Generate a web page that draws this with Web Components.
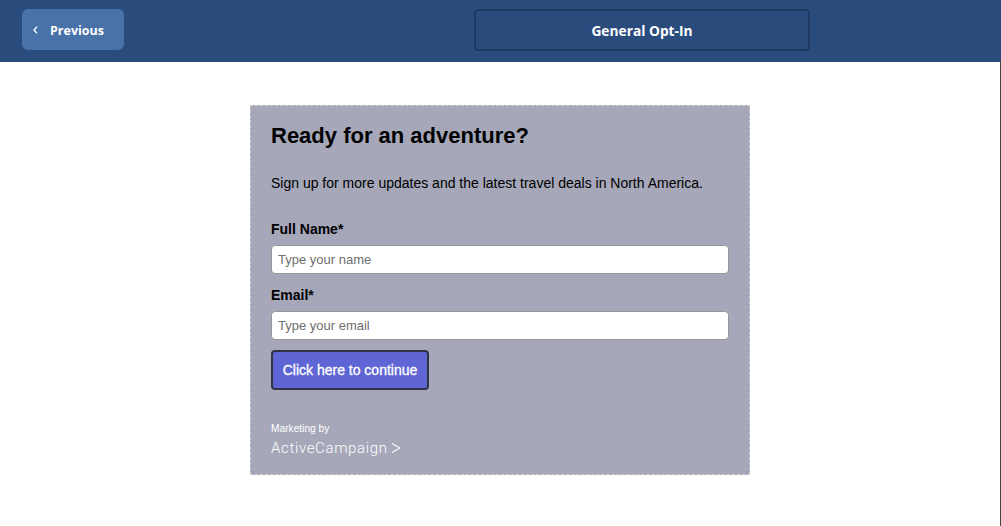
<!DOCTYPE html>
<html><head><meta charset="utf-8"><style>
html,body{margin:0;padding:0;background:#fff;height:526px;overflow:hidden}
body{font-family:"Liberation Sans",Arial,sans-serif}
</style></head><body>
<app-page>
<top-bar>
<back-button slot="left">Previous</back-button>
<title-box slot="center">General Opt-In</title-box>
</top-bar>
<form-card>
<h-line>Ready for an adventure?</h-line>
<sub-line>Sign up for more updates and the latest travel deals in North America.</sub-line>
<form-field label="Full Name*" placeholder="Type your name"></form-field>
<form-field label="Email*" placeholder="Type your email"></form-field>
<submit-button>Click here to continue</submit-button>
<brand-mark></brand-mark>
</form-card>
</app-page>
<script>
function def(name,html){
  customElements.define(name,class extends HTMLElement{
    constructor(){super();const s=this.attachShadow({mode:'open'});s.innerHTML=html;}
  });
}
def('app-page',`<style>:host{display:block;height:526px;box-sizing:border-box;border-right:1px solid #444}</style><slot></slot>`);
def('top-bar',`<style>:host{display:block;height:62px;background:#294c7d;margin-right:-1px;box-sizing:border-box;padding:9px 22px 0}
 .g{display:grid;grid-template-columns:102px 350px 336px;align-items:start}
 .c{grid-column:3}</style><div class="g"><slot name="left"></slot><div class="c"><slot name="center"></slot></div></div>`);
def('back-button',`<style>:host{display:flex;box-sizing:border-box;width:102px;height:41px;background:#4872a8;border-radius:6px;align-items:center;color:#fff;font:700 12.5px/1 "Open Sans",sans-serif;padding:3px 0 0 11px}
 svg{width:5px;height:8px;margin:-3px 12px 0 0;flex:none}</style>
 <svg viewBox="0 0 5 8"><path d="M4 .8 1 4l3 3.2" fill="none" stroke="#fff" stroke-width="1.3"/></svg><span><slot></slot></span>`);
def('title-box',`<style>:host{display:flex;box-sizing:border-box;width:336px;height:42px;border:2px solid #203b63;border-radius:4px;align-items:center;justify-content:center;color:#fff;font:700 13.75px/1 "Open Sans",sans-serif;padding-top:2px}</style><slot></slot>`);
def('form-card',`<style>:host{display:block;box-sizing:border-box;width:500px;height:370px;margin:43px 0 0 250px;background:#a6a7b9;border:1px dashed #ccc;padding:15px 20px 0;color:#000}</style><slot></slot>`);
def('h-line',`<style>:host{display:block;font:700 22px/29px "Liberation Sans",Arial,sans-serif;height:29px}</style><slot></slot>`);
def('sub-line',`<style>:host{display:block;font:400 14px/18px "Liberation Sans",Arial,sans-serif;margin-top:24px;height:18px}</style><slot></slot>`);
customElements.define('form-field',class extends HTMLElement{
  constructor(){super();this.attachShadow({mode:'open'});}
  connectedCallback(){
    this.shadowRoot.innerHTML=`<style>:host{display:block;margin-top:12px}
    :host(:first-of-type){margin-top:28px}
    label{display:block;font:700 14px/18px "Liberation Sans",Arial,sans-serif;height:18px;margin-bottom:7px}
    input{display:block;box-sizing:border-box;width:458px;height:29px;padding:0 6px;border:1px solid #979797;border-radius:4px;background:#fff;font:400 13px "Liberation Sans",Arial,sans-serif;outline:0;margin:0}
    input::placeholder{color:#6e6e6e;opacity:1}</style>
    <label>${this.getAttribute('label')}</label><input placeholder="${this.getAttribute('placeholder')}">`;
  }
});
def('submit-button',`<style>:host{display:flex;box-sizing:border-box;width:158px;height:40px;margin-top:10px;background:#5f65d4;border:2px solid #313442;border-radius:4px;align-items:center;justify-content:center;color:#fff;font:400 14px/1 "Liberation Sans",Arial,sans-serif;-webkit-text-stroke:.3px #fff}</style><slot></slot>`);
def('brand-mark',`<style>:host{display:block;margin-top:33px;color:#fff}
 .m{font:400 10.2px/12px "Liberation Sans",Arial,sans-serif;height:12px}
 .l{display:flex;align-items:center;margin-top:3px;height:20px;font:300 15px/20px Roboto,sans-serif;letter-spacing:.65px}
 svg{width:10px;height:12px;margin-left:3.5px}</style>
 <div class="m">Marketing by</div>
 <div class="l"><span>ActiveCampaign</span><svg viewBox="0 0 10 12"><path d="M1 1.5l8 4.5-8 4.5" fill="none" stroke="#fff" stroke-width="1.1"/></svg></div>`);
</script>
</body></html>
